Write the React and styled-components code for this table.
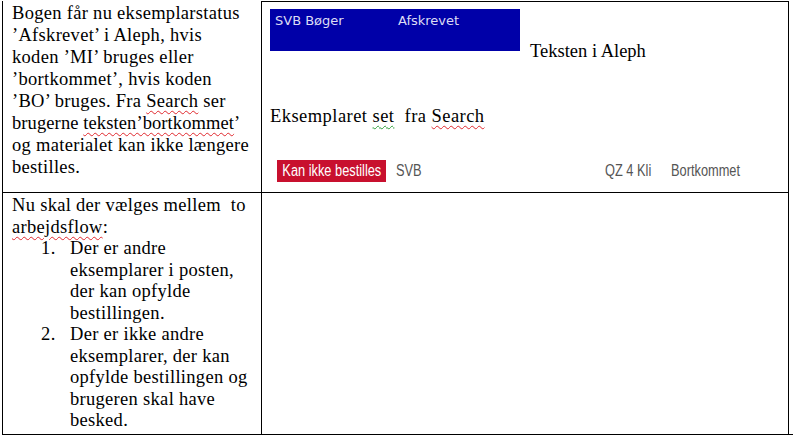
import React from 'react';
import styled, { createGlobalStyle } from 'styled-components';

const GlobalStyle = createGlobalStyle`
  html, body {
    margin: 0;
    padding: 0;
    background: #fff;
  }
  body {
    font-family: 'Liberation Serif', 'Times New Roman', serif;
    color: #000;
  }
`;

const Page = styled.div`
  padding: 1px 0 0 2px;
  width: 793px;
  height: 438px;
  box-sizing: border-box;
  overflow: hidden;
`;

const Table = styled.div`
  display: grid;
  grid-template-columns: 259px 527px;
  grid-template-rows: 191px 242px;
  border-left: 1px solid #000;
  border-bottom: 1px solid #000;
`;

const Cell = styled.div`
  box-sizing: border-box;
  border-right: 1px solid #000;
  border-top: ${({ $top }) => ($top ? '1px solid #000' : 'none')};
  padding: ${({ $pad }) => $pad || '1px 4px 0 9px'};
  font-size: 18.5px;
  line-height: ${({ $lh }) => $lh || 22}px;
  overflow: hidden;
`;

const Line = styled.span`
  display: block;
  white-space: nowrap;
  letter-spacing: ${({ $ls }) => ($ls != null ? $ls : 0.3)}px;
`;

const Wavy = styled.span`
  text-decoration: underline wavy ${({ $color }) => $color || '#e0282d'};
  text-decoration-thickness: 1px;
  text-underline-offset: 3px;
`;

const List = styled.ol`
  margin: 0;
  padding: 0 0 0 58px;
  list-style: none;
  counter-reset: item;
`;

const Item = styled.li`
  position: relative;
  counter-increment: item;

  &::before {
    content: counter(item) '.';
    position: absolute;
    left: -29px;
    letter-spacing: 0.6px;
  }
`;

const AlephRow = styled.div`
  display: flex;
  align-items: flex-start;
  gap: 10px;
`;

const AlephBar = styled.div`
  display: flex;
  width: 250px;
  height: 42px;
  box-sizing: border-box;
  padding: 3px 0 0 5px;
  background: #0000a8;
  color: #dcdcf4;
  font-family: 'DejaVu Sans', Verdana, sans-serif;
  font-size: 13px;
  line-height: 18px;
`;

const AlephField = styled.span`
  width: ${({ $w }) => $w}px;
`;

const AlephLabel = styled.span`
  padding-top: 31px;
`;

const SearchLabel = styled.div`
  margin-top: 43px;
  letter-spacing: 0.45px;
`;

const SearchRow = styled.div`
  display: flex;
  align-items: center;
  margin: 33px 0 0 7px;
  font-family: 'Liberation Sans', Arial, sans-serif;
  font-size: 16px;
  color: #555;
  height: 22px;
`;

const Badge = styled.span`
  display: inline-flex;
  align-items: center;
  justify-content: center;
  width: 109px;
  height: 22px;
  background: #c8102e;
  color: #fff;
  margin-right: 10px;
  overflow: hidden;
`;

const Field = styled.span`
  flex: none;
  width: ${({ $w }) => ($w ? `${$w}px` : 'auto')};
  white-space: nowrap;
`;

const Squish = styled.span`
  display: inline-block;
  white-space: nowrap;
  transform: scaleX(0.8);
  transform-origin: ${({ $origin }) => $origin || 'left'} center;
`;

export default function App() {
  return (
    <>
      <GlobalStyle />
      <Page>
        <Table>
          <Cell>
            <Line>Bogen får nu eksemplarstatus</Line>
            <Line>’Afskrevet’ i Aleph, hvis</Line>
            <Line>koden ’MI’ bruges eller</Line>
            <Line>’bortkommet’, hvis koden</Line>
            <Line>’BO’ bruges. Fra <Wavy>Search</Wavy> ser</Line>
            <Line $ls={0.1}>brugerne <Wavy>teksten’bortkommet</Wavy>’</Line>
            <Line>og materialet kan ikke længere</Line>
            <Line>bestilles.</Line>
          </Cell>
          <Cell $top $pad="7px 8px 0 8px">
            <AlephRow>
              <AlephBar>
                <AlephField $w={123}>SVB Bøger</AlephField>
                <AlephField $w={110}>Afskrevet</AlephField>
              </AlephBar>
              <AlephLabel>Teksten i Aleph</AlephLabel>
            </AlephRow>
            <SearchLabel>
              Eksemplaret <Wavy $color="#2e9e3a">set</Wavy>&nbsp; fra <Wavy>Search</Wavy>
            </SearchLabel>
            <SearchRow>
              <Badge>
                <Squish $origin="center">Kan ikke bestilles</Squish>
              </Badge>
              <Field $w={209}>
                <Squish>SVB</Squish>
              </Field>
              <Field $w={66}>
                <Squish>QZ 4 Kli</Squish>
              </Field>
              <Field>
                <Squish>Bortkommet</Squish>
              </Field>
            </SearchRow>
          </Cell>
          <Cell $top $lh={21.5} $pad="2px 4px 0 9px">
            <Line>Nu skal der vælges mellem&nbsp; to</Line>
            <Line><Wavy>arbejdsflow</Wavy>:</Line>
            <List>
              <Item>
                <Line>Der er andre</Line>
                <Line>eksemplarer i posten,</Line>
                <Line>der kan opfylde</Line>
                <Line>bestillingen.</Line>
              </Item>
              <Item>
                <Line>Der er ikke andre</Line>
                <Line>eksemplarer, der kan</Line>
                <Line>opfylde bestillingen og</Line>
                <Line>brugeren skal have</Line>
                <Line>besked.</Line>
              </Item>
            </List>
          </Cell>
          <Cell $top />
        </Table>
      </Page>
    </>
  );
}
